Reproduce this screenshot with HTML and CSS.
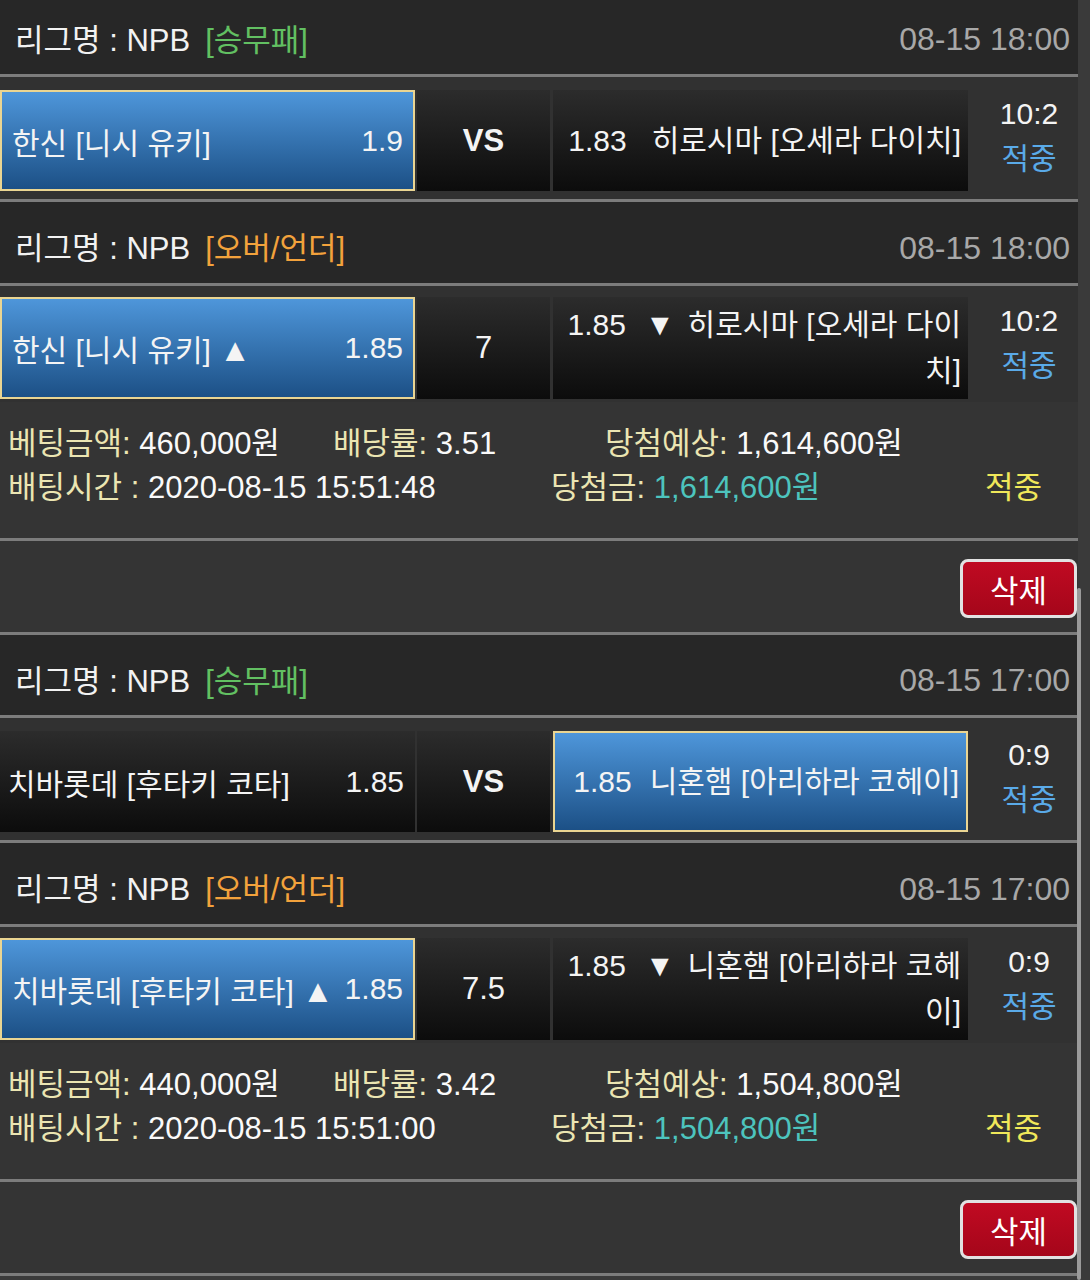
FILE: index.html
```html
<!DOCTYPE html>
<html lang="ko">
<head>
<meta charset="utf-8">
<title>베팅내역</title>
<link rel="stylesheet" href="styles.css">
</head>
<body>
<div class="frame">
  <div class="page">
    <section class="bet">
      <div class="hdr cut"><div class="league">리그명 : NPB<span class="tag win">[승무패]</span></div><div class="date">08-15 18:00</div></div>
      <div class="match r1">
        <div class="cell home sel"><span>한신 [니시 유키]</span><span>1.9</span></div>
        <div class="cell mid"><b>VS</b></div>
        <div class="cell away"><div class="txt"><span class="odd">1.83</span>히로시마 [오세라 다이치]</div></div>
        <div class="score"><div>10:2</div><div class="hit">적중</div></div>
      </div>
      <div class="hdr h2"><div class="league">리그명 : NPB<span class="tag ou">[오버/언더]</span></div><div class="date">08-15 18:00</div></div>
      <div class="match r2">
        <div class="cell home sel"><span>한신 [니시 유키] <span class="tri">▲</span></span><span>1.85</span></div>
        <div class="cell mid">7</div>
        <div class="cell away"><div class="txt"><span class="odd">1.85</span><span class="arrow">▼</span>히로시마 [오세라 다이치]</div></div>
        <div class="score"><div>10:2</div><div class="hit">적중</div></div>
      </div>
      <div class="info">
        <div class="line"><span class="a1"><span class="lbl">베팅금액:</span> 460,000원</span><span class="a2"><span class="lbl">배당률:</span> 3.51</span><span><span class="lbl">당첨예상:</span> 1,614,600원</span></div>
        <div class="line"><span class="b1"><span class="lbl">배팅시간 :</span> 2020-08-15 15:51:48</span><span class="b2"><span class="lbl">당첨금:</span> <span class="won">1,614,600원</span></span><span class="res">적중</span></div>
      </div>
      <div class="btnrow"><button class="del" type="button">삭제</button></div>
    </section>

    <section class="bet">
      <div class="hdr"><div class="league">리그명 : NPB<span class="tag win">[승무패]</span></div><div class="date">08-15 17:00</div></div>
      <div class="match r1">
        <div class="cell home"><span>치바롯데 [후타키 코타]</span><span>1.85</span></div>
        <div class="cell mid"><b>VS</b></div>
        <div class="cell away sel"><div class="txt"><span class="odd tight">1.85</span>니혼햄 [아리하라 코헤이]</div></div>
        <div class="score"><div>0:9</div><div class="hit">적중</div></div>
      </div>
      <div class="hdr h2"><div class="league">리그명 : NPB<span class="tag ou">[오버/언더]</span></div><div class="date">08-15 17:00</div></div>
      <div class="match r2">
        <div class="cell home sel"><span>치바롯데 [후타키 코타] <span class="tri">▲</span></span><span>1.85</span></div>
        <div class="cell mid">7.5</div>
        <div class="cell away"><div class="txt"><span class="odd">1.85</span><span class="arrow">▼</span>니혼햄 [아리하라 코헤이]</div></div>
        <div class="score"><div>0:9</div><div class="hit">적중</div></div>
      </div>
      <div class="info">
        <div class="line"><span class="a1"><span class="lbl">베팅금액:</span> 440,000원</span><span class="a2"><span class="lbl">배당률:</span> 3.42</span><span><span class="lbl">당첨예상:</span> 1,504,800원</span></div>
        <div class="line"><span class="b1"><span class="lbl">배팅시간 :</span> 2020-08-15 15:51:00</span><span class="b2"><span class="lbl">당첨금:</span> <span class="won">1,504,800원</span></span><span class="res">적중</span></div>
      </div>
      <div class="btnrow"><button class="del" type="button">삭제</button></div>
    </section>
  </div>
  <div class="scroll"></div>
</div>
</body>
</html>
```

FILE: styles.css
```css
html, body {
  margin: 0;
  padding: 0;
}
body {
  background: #3a3a3a;
  color: #f4f4f4;
  font-family: "Liberation Sans", "Noto Sans CJK KR", sans-serif;
}
.frame {
  position: relative;
  width: 1090px;
  height: 1280px;
  overflow: hidden;
}
.page {
  width: 1078px;
}

/* header */
.hdr {
  height: 83px;
  box-sizing: border-box;
  padding: 6px 8px 0 15px;
  display: flex;
  justify-content: space-between;
  align-items: center;
  background: #272727;
  border-bottom: 3px solid #7c7c7c;
}
.hdr.cut {
  height: 77px;
  padding-top: 0;
}
.hdr.h2 {
  height: 84px;
}
.league {
  font-size: 31px;
  color: #f2f2f2;
}
.tag {
  margin-left: 15px;
}
.tag.win { color: #62c062; }
.tag.ou { color: #f2a23c; }
.date {
  font-size: 32px;
  color: #a8a8a8;
  padding-top: 5px;
}

/* match rows */
.match {
  display: flex;
  box-sizing: border-box;
  background: #313131;
}
.match.r1 {
  height: 125px;
  padding-top: 13px;
  border-bottom: 3px solid #7c7c7c;
}
.match.r2 {
  height: 116px;
  padding-top: 11px;
}
.cell {
  height: 101px;
  box-sizing: border-box;
  display: flex;
  align-items: center;
  font-size: 30px;
  color: #f4f4f4;
  background: linear-gradient(#2c2c2c, #0c0c0c);
}
.r2 .cell {
  height: 102px;
}
.home {
  width: 415px;
  justify-content: space-between;
  padding: 0 11px 0 8px;
}
.mid {
  width: 133px;
  margin: 0 3px 0 2px;
  justify-content: center;
  font-size: 31px;
}
.mid b {
  font-weight: bold;
}
.away {
  width: 415px;
  justify-content: flex-end;
  text-align: right;
  padding: 0 7px 0 8px;
}
.away .txt {
  line-height: 46px;
}
.odd {
  margin-right: 25px;
}
.odd.tight {
  margin-right: 18px;
}
.arrow {
  margin: 0 13px 0 -6px;
}
.tri {
  font-size: 32px;
  line-height: 1;
}
.sel {
  background: linear-gradient(#4e96da, #1c5086);
  border: 2px solid #ead592;
}
.home.sel {
  padding-left: 10px;
  padding-right: 10px;
}
.score {
  flex: 1;
  height: 101px;
  box-sizing: border-box;
  padding: 0 0 9px 12px;
  display: flex;
  flex-direction: column;
  justify-content: center;
  align-items: center;
  font-size: 30px;
  line-height: 45px;
  color: #f4f4f4;
}
.hit {
  color: #5aaae8;
}

/* info */
.info {
  height: 139px;
  box-sizing: border-box;
  padding: 20px 0 0 8px;
  background: #343434;
  border-bottom: 3px solid #7c7c7c;
  font-size: 31px;
  line-height: 44px;
  color: #fafafa;
}
.line {
  display: flex;
  white-space: nowrap;
}
.a1 { width: 325px; }
.a2 { width: 272px; }
.b1 { width: 543px; }
.b2 { width: 434px; }
.lbl { color: #ebe5b2; }
.won { color: #4dc4be; }
.res { color: #f0e85a; }

/* delete button row */
.btnrow {
  height: 94px;
  box-sizing: border-box;
  padding: 18px 1px 0 0;
  display: flex;
  justify-content: flex-end;
  align-items: flex-start;
  background: #343434;
  border-bottom: 3px solid #7c7c7c;
}
.del {
  width: 117px;
  height: 59px;
  box-sizing: border-box;
  border: 3px solid #e2e2e2;
  border-radius: 8px;
  background: linear-gradient(#c00a22, #a5061a);
  color: #ffffff;
  font-family: "Liberation Sans", "Noto Sans CJK KR", sans-serif;
  font-size: 31px;
  padding: 0;
  display: flex;
  align-items: center;
  justify-content: center;
}

/* scrollbar edge */
.scroll {
  position: absolute;
  left: 1077px;
  top: 588px;
  bottom: 0;
  width: 4px;
  background: #9a9a9a;
  border-radius: 2px;
}
```
